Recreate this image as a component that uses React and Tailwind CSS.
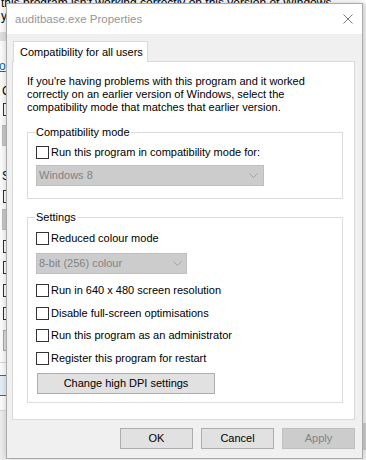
import React from "react";

function Box({ className = "" }) {
  return <span className={"block w-[13px] h-[13px] border border-[#333333] bg-white shrink-0 " + className} />;
}

function Check({ label, className = "" }) {
  return (
    <div className={"flex items-center h-[16px] " + className}>
      <Box />
      <span className="ml-[2px] whitespace-nowrap">{label}</span>
    </div>
  );
}

function Chevron() {
  return (
    <svg width="9" height="5" viewBox="0 0 9 5" className="shrink-0">
      <polyline points="0.5,0.5 4.5,4.5 8.5,0.5" fill="none" stroke="#a3a3a3" strokeWidth="1" />
    </svg>
  );
}

function Btn({ children, className = "" }) {
  return (
    <div className={"h-[21px] border flex items-center justify-center " + className}>{children}</div>
  );
}

export default function App() {
  return (
    <div className="relative w-[366px] h-[460px] overflow-hidden bg-white flex font-['Liberation_Sans',Arial,sans-serif] text-[11px] text-black">
      {/* window behind: left strip */}
      <div className="w-[6px] flex flex-col shrink-0">
        <div className="mt-[-3px] h-[13px] leading-[13px] whitespace-nowrap text-black text-[12px] pl-[1px]">
          this program isn't working correctly on this version of Windows,
        </div>
        <div className="h-[13px] w-[6px] overflow-hidden leading-[13px] whitespace-nowrap text-[12px] pl-[1px]">you</div>
        <div className="mt-[9px] h-[9px] bg-[#e3e3e3]" />
        <div className="mt-[17px] h-[16px] w-[6px] overflow-hidden leading-[16px] whitespace-nowrap text-[#0066cc] underline text-[12px]">
          <span className="-ml-[1px]">o</span>
        </div>
        <div className="mt-[9px] h-[16px] w-[6px] overflow-hidden leading-[16px] whitespace-nowrap pl-[2px] text-[12px]">C</div>
        <Box className="mt-[4px] ml-[3px]" />
        <div className="mt-[9px] ml-[2px] h-[21px] w-[20px] bg-[#cccccc] border border-[#bfbfbf]" />
        <div className="mt-[22px] h-[16px] w-[6px] overflow-hidden leading-[16px] whitespace-nowrap pl-[2px] text-[12px]">S</div>
        <Box className="mt-[6px] ml-[3px]" />
        <div className="mt-[6px] ml-[2px] h-[21px] w-[20px] bg-[#cccccc] border border-[#bfbfbf]" />
        <Box className="mt-[10px] ml-[3px]" />
        <Box className="mt-[8px] ml-[3px]" />
        <Box className="mt-[10px] ml-[3px]" />
        <Box className="mt-[10px] ml-[3px]" />
        <div className="mt-[10px] ml-[3px] h-[21px] w-[20px] bg-[#e1e1e1] border border-[#adadad]" />
        <div className="mt-[11px] h-[1px] bg-[#dcdcdc]" />
        <div className="mt-[12px] h-[21px] bg-[#e5f1fb] border-y border-[#0078d7]" />
        <div className="mt-[14px] h-[1px] bg-[#d9d9d9]" />
        <div className="flex-1 bg-[#f0f0f0]" />
      </div>
      <div className="flex-1" />
      <div className="w-[4px] flex flex-col shrink-0 bg-[#f0f0f0]">
        <div className="h-[3px] bg-white" />
        <div className="mt-[420px] h-[27px] bg-[#cccccc]" />
      </div>

      {/* dialog */}
      <div className="absolute left-[6px] top-[3px] w-[357px] h-[456px] border border-[#aaaaaa] bg-[#f0f0f0] flex flex-col shadow-[0_0_8px_rgba(0,0,0,0.22)]">
        <div className="h-[30px] bg-white flex items-center justify-between pl-[8px] pr-[9px] shrink-0">
          <span className="text-[#969696] whitespace-nowrap text-[11.5px] leading-[14px]">auditbase.exe Properties</span>
          <svg width="10" height="10" viewBox="0 0 10 10">
            <path d="M0.5 0.5 L9.5 9.5 M9.5 0.5 L0.5 9.5" stroke="#7a7a7a" strokeWidth="1" fill="none" />
          </svg>
        </div>
        <div className="flex-1 flex flex-col pt-[7px] pl-[5px] pr-[7px]">
          <div className="flex pl-[1px]">
            <div className="relative z-10 -mb-px h-[21px] w-[135px] border border-b-0 border-[#d9d9d9] bg-white pl-[6px] flex items-center whitespace-nowrap">
              Compatibility for all users
            </div>
          </div>
          <div className="w-[343px] h-[359px] border border-[#d9d9d9] bg-white pt-[13px] pl-[14px]">
            <p className="leading-[13px] whitespace-nowrap">
              If you're having problems with this program and it worked
              <br />
              correctly on an earlier version of Windows, select the
              <br />
              compatibility mode that matches that earlier version.
            </p>
            <fieldset className="mt-[10px] w-[316px] border border-[#dcdcdc] pb-[12px]">
              <legend className="ml-[7px] px-[1px] leading-[16px]">Compatibility mode</legend>
              <div className="pl-[8px]">
                <Check className="mt-[4px]" label="Run this program in compatibility mode for:" />
                <div className="mt-[5px] w-[228px] h-[21px] bg-[#cccccc] border border-[#bfbfbf] flex items-center justify-between pl-[2px] pr-[5px] text-[#838383]">
                  <span>Windows 8</span>
                  <Chevron />
                </div>
              </div>
            </fieldset>
            <fieldset className="mt-[10px] w-[316px] border border-[#dcdcdc] pb-[8px]">
              <legend className="ml-[7px] px-[1px] leading-[16px]">Settings</legend>
              <div className="pl-[8px]">
                <Check className="mt-[5px]" label="Reduced colour mode" />
                <div className="mt-[7px] w-[151px] h-[21px] bg-[#cccccc] border border-[#bfbfbf] flex items-center justify-between pl-[2px] pr-[4px] text-[#838383]">
                  <span>8-bit (256) colour</span>
                  <Chevron />
                </div>
                <Check className="mt-[8px]" label="Run in 640 x 480 screen resolution" />
                <Check className="mt-[7px]" label="Disable full-screen optimisations" />
                <Check className="mt-[6px]" label="Run this program as an administrator" />
                <Check className="mt-[7px]" label="Register this program for restart" />
                <Btn className="mt-[7px] ml-[1px] w-[178px] bg-[#e1e1e1] border-[#adadad]">Change high DPI settings</Btn>
              </div>
            </fieldset>
          </div>
          <div className="mt-[8px] flex justify-end gap-[8px]">
            <Btn className="w-[73px] bg-[#e1e1e1] border-[#adadad]">OK</Btn>
            <Btn className="w-[73px] bg-[#e1e1e1] border-[#adadad]">Cancel</Btn>
            <Btn className="w-[73px] bg-[#cccccc] border-[#bfbfbf] text-[#838383]">Apply</Btn>
          </div>
        </div>
      </div>
    </div>
  );
}
